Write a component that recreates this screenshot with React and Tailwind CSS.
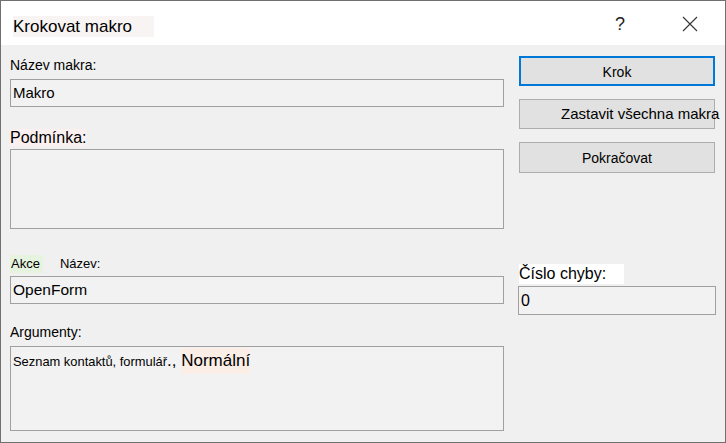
import React from 'react';

const font = { fontFamily: '"Liberation Sans", Arial, sans-serif' };

function Field({ className = '', children }) {
  return (
    <div className={`border border-[#a0a0a0] bg-[#f2f2f2] ${className}`}>
      {children}
    </div>
  );
}

function Button({ primary, className = '', children }) {
  return (
    <div
      className={`flex items-center bg-[#e1e1e1] text-black whitespace-nowrap ${
        primary ? 'border-2 border-[#0078d7]' : 'border border-[#adadad]'
      } ${className}`}
    >
      {children}
    </div>
  );
}

export default function App() {
  return (
    <div
      style={font}
      className="w-[726px] h-[443px] border border-[#707070] bg-[#f0f0f0] flex flex-col overflow-hidden text-black"
    >
      {/* title bar */}
      <div className="h-[44px] bg-white flex items-start shrink-0">
        <span className="ml-[12px] mt-[15px] h-[21px] leading-[21px] pr-[22px] text-[17px] bg-[#f9f4f4]">
          Krokovat makro
        </span>
        <span className="ml-auto mt-[12px] text-[18px] leading-[22px] text-[#222]">?</span>
        <svg className="ml-[57px] mt-[15px] mr-[27px]" width="16" height="16" viewBox="0 0 16 16">
          <path d="M1 1 L15 15 M15 1 L1 15" stroke="#333" strokeWidth="1.1" fill="none" />
        </svg>
      </div>

      {/* body */}
      <div className="flex flex-1 pl-[9px]">
        {/* left column */}
        <div className="w-[494px] flex flex-col">
          <div className="mt-[10px] h-[20px] leading-[20px] text-[14px]">Název makra:</div>
          <Field className="mt-[4px] h-[28px] flex items-center pl-[2px] text-[15px]">Makro</Field>

          <div className="mt-[21px] h-[20px] leading-[20px] text-[16px]">
            <span className="bg-[#fbf0f0]">Podmínka:</span>
          </div>
          <Field className="mt-[1px] h-[80px]" />

          <div className="mt-[26px] h-[18px] leading-[18px] text-[13px] flex">
            <span className="bg-[#e6f3df] pl-[1px] pr-[3px]">Akce</span>
            <span className="ml-[17px]">Název:</span>
          </div>
          <Field className="mt-[3px] h-[28px] flex items-center pl-[2px] text-[15.5px]">OpenForm</Field>

          <div className="mt-[18px] h-[20px] leading-[20px] text-[14px]">Argumenty:</div>
          <Field className="mt-[4px] h-[85px] pl-[2px] pt-[1px]">
            <div className="flex items-baseline whitespace-nowrap">
              <span className="text-[12.9px]">Seznam kontaktů, formulář</span>
              <span className="text-[17px]">.,&nbsp;</span>
              <span className="text-[17px] bg-[#fbeee6]">Normální</span>
            </div>
          </Field>
        </div>

        {/* right column */}
        <div className="ml-[15px] w-[196px] flex flex-col">
          <Button primary className="mt-[11px] h-[30px] justify-center pt-[2px] text-[14px]">Krok</Button>
          <Button className="mt-[13px] h-[30px] pl-[41px] text-[15px]">Zastavit všechna makra</Button>
          <Button className="mt-[13px] h-[31px] justify-center pt-[2px] text-[14px]">Pokračovat</Button>

          <div className="mt-[91px] h-[20px] leading-[20px] text-[16px] flex">
            <span className="bg-white pr-[18px]">Číslo chyby:</span>
          </div>
          <Field className="mt-[2px] -ml-[1px] w-[198px] h-[29px] flex items-center pl-[2px] text-[16px]">0</Field>
        </div>
      </div>
    </div>
  );
}
